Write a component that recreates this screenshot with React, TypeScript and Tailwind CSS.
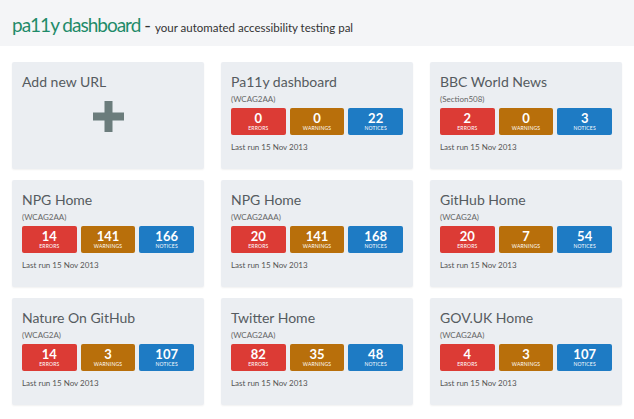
import React from 'react'

interface Site {
    name: string
    standard: string
    errors: number
    warnings: number
    notices: number
}

const sites: Site[] = [
    { name: 'Pa11y dashboard', standard: 'WCAG2AA', errors: 0, warnings: 0, notices: 22 },
    { name: 'BBC World News', standard: 'Section508', errors: 2, warnings: 0, notices: 3 },
    { name: 'NPG Home', standard: 'WCAG2AA', errors: 14, warnings: 141, notices: 166 },
    { name: 'NPG Home', standard: 'WCAG2AAA', errors: 20, warnings: 141, notices: 168 },
    { name: 'GitHub Home', standard: 'WCAG2A', errors: 20, warnings: 7, notices: 54 },
    { name: 'Nature On GitHub', standard: 'WCAG2A', errors: 14, warnings: 3, notices: 107 },
    { name: 'Twitter Home', standard: 'WCAG2AA', errors: 82, warnings: 35, notices: 48 },
    { name: 'GOV.UK Home', standard: 'WCAG2AA', errors: 4, warnings: 3, notices: 107 },
]

const Badge: React.FC<{ count: number; label: string; color: string }> = ({ count, label, color }) => (
    <div className={`${color} h-[27px] rounded-[2px] flex flex-col items-center justify-center text-white`}>
        <span className="text-[13px] font-bold leading-[13px]">{count}</span>
        <span className="text-[5px] uppercase leading-[7px] tracking-[0.2px]">{label}</span>
    </div>
)

const SiteCard: React.FC<{ site: Site }> = ({ site }) => (
    <div className="h-[107px] bg-[#ebeef2] rounded-[2px] px-[10px] pt-[10px] shadow-[0_1px_2px_rgba(0,0,0,0.06)]">
        <div className="text-[14px] leading-[20px] text-[#555b60]">{site.name}</div>
        <div className="text-[8px] leading-[12px] mt-[1px] text-[#666]">({site.standard})</div>
        <div className="grid grid-cols-3 gap-[4px] mt-[3px]">
            <Badge count={site.errors} label="errors" color="bg-[#dc3b35]" />
            <Badge count={site.warnings} label="warnings" color="bg-[#b86f0b]" />
            <Badge count={site.notices} label="notices" color="bg-[#1e7bc4]" />
        </div>
        <div className="text-[8px] leading-[12px] mt-[6px] text-[#555]">Last run 15 Nov 2013</div>
    </div>
)

export default function App() {
    return (
        <div className="w-[634px] h-[419px] bg-white overflow-hidden" style={{ fontFamily: 'Lato, "Open Sans", sans-serif' }}>
            <div className="h-[46px] bg-[#f4f5f7] px-[12px] pt-[11px] flex items-baseline">
                <span className="text-[19px] leading-[28px] text-[#1f8b69] tracking-[-1px]">pa11y dashboard</span>
                <span className="text-[18px] leading-[28px] text-[#333] ml-[4px]">-</span>
                <span className="text-[11.5px] text-[#333] ml-[4px]">your automated accessibility testing pal</span>
            </div>
            <div className="grid grid-cols-3 gap-x-[17px] gap-y-[11px] px-[12px] pt-[16px]">
                <div className="h-[107px] bg-[#ebeef2] rounded-[2px] px-[10px] pt-[10px] flex flex-col shadow-[0_1px_2px_rgba(0,0,0,0.06)]">
                    <div className="text-[14px] leading-[20px] text-[#555b60]">Add new URL</div>
                    <div className="flex justify-center mt-[9px]">
                        <svg width="31" height="31" viewBox="0 0 31 31">
                            <rect x="11.5" y="0" width="8" height="31" fill="#6b7c7c" />
                            <rect x="0" y="11.5" width="31" height="8" fill="#6b7c7c" />
                        </svg>
                    </div>
                </div>
                {sites.map((s, i) => (
                    <SiteCard key={i} site={s} />
                ))}
            </div>
        </div>
    )
}
